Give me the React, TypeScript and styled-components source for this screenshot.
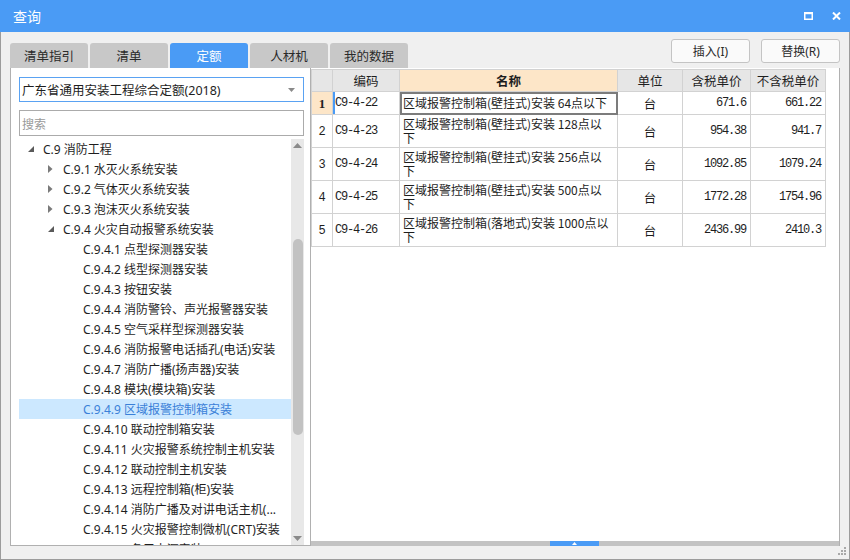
import styled, { createGlobalStyle } from "styled-components";

const GlobalStyle = createGlobalStyle`
  html, body {
    margin: 0;
    padding: 0;
    background: #ffffff;
  }
  * {
    box-sizing: border-box;
  }
`;

const UI_FONT = `"Segoe UI", "Noto Sans", "Noto Sans CJK SC", sans-serif`;
const CJK_FONT = `"Noto Sans CJK SC", sans-serif`;
const MONO_FONT = `"Liberation Mono", "Noto Sans CJK SC", monospace`;
const BLUE = "#4a9bf5";

const Window = styled.div`
  width: 850px;
  height: 560px;
  display: flex;
  flex-direction: column;
  background: #f0f0f0;
  border: 1px solid #9c9c9c;
  border-top: none;
  font-family: ${UI_FONT};
  color: #1e1e1e;
`;

const TitleBar = styled.div`
  height: 32px;
  margin: 0 -1px;
  padding: 0 9px 0 13px;
  display: flex;
  align-items: center;
  background: ${BLUE};
  color: #fff;
  font-family: ${CJK_FONT};
  font-size: 14px;
`;

const Title = styled.span`
  flex: 1;
  margin-top: -1px;
`;

const TitleIcons = styled.div`
  display: flex;
  gap: 19px;
  align-items: center;
`;

const Body = styled.div`
  flex: 1;
  display: flex;
  flex-direction: column;
  padding: 7px 9px 0 9px;
  min-height: 0;
`;

const TopRow = styled.div`
  height: 29px;
  display: flex;
  align-items: flex-end;
`;

const Tabs = styled.div`
  display: flex;
  gap: 2px;
  flex: 1;
`;

const Tab = styled.div<{ $active?: boolean }>`
  width: 78px;
  height: 25px;
  display: flex;
  align-items: center;
  justify-content: center;
  border-radius: 3px 3px 0 0;
  background: ${(p) => (p.$active ? BLUE : "#c8c8c8")};
  color: ${(p) => (p.$active ? "#fff" : "#2a2a2a")};
  font-family: ${CJK_FONT};
  font-size: 12.5px;
`;

const Buttons = styled.div`
  display: flex;
  gap: 11px;
  align-self: flex-start;
`;

const Button = styled.div`
  width: 79px;
  height: 24px;
  display: flex;
  align-items: center;
  justify-content: center;
  border: 1px solid #c4c4c4;
  border-radius: 3px;
  background: #fafafa;
  color: #2a2a2a;
  font-size: 12px;
  font-family: ${UI_FONT};
`;

const Panels = styled.div`
  height: 478px;
  display: flex;
`;

const LeftPanel = styled.div`
  width: 301px;
  display: flex;
  flex-direction: column;
  background: #fff;
  border: 1px solid #b0b0b0;
  border-top: none;
  padding: 9px 6px 0 8px;
`;

const Select = styled.div`
  height: 25px;
  display: flex;
  align-items: center;
  padding: 0 8px 0 2px;
  border: 1px solid #5aa2f2;
  font-family: ${UI_FONT};
  font-size: 12.5px;
  color: #1e1e1e;
  span {
    flex: 1;
  }
`;

const Search = styled.div`
  height: 26px;
  margin-top: 8px;
  display: flex;
  align-items: center;
  padding: 0 2px;
  border: 1px solid #ababab;
  color: #9a9a9a;
  font-family: ${CJK_FONT};
  font-size: 12px;
`;

const TreeArea = styled.div`
  flex: 1;
  margin-top: 3px;
  display: flex;
  min-height: 0;
`;

const TreeList = styled.div`
  flex: 1;
  overflow: hidden;
`;

const TreeRow = styled.div<{ $level: number; $selected?: boolean }>`
  height: 20px;
  display: flex;
  align-items: center;
  padding-left: ${(p) => 8 + (p.$level - 1) * 20}px;
  background: ${(p) => (p.$selected ? "#cce8ff" : "transparent")};
  color: ${(p) => (p.$selected ? "#3a80d8" : "#1e1e1e")};
  font-size: 12px;
  white-space: nowrap;
`;

const Expander = styled.span`
  width: 16px;
  height: 20px;
  display: flex;
  align-items: center;
  padding-left: 1px;
  flex-shrink: 0;
`;

const VScroll = styled.div`
  width: 13px;
  display: flex;
  flex-direction: column;
  background: #e8e8e8;
`;

const ScrollArrow = styled.div`
  height: 13px;
  display: flex;
  align-items: center;
  justify-content: center;
  flex-shrink: 0;
`;

const ScrollTrack = styled.div`
  flex: 1;
  padding: 87px 1px 0 2px;
`;

const ScrollThumb = styled.div`
  height: 196px;
  border-radius: 5px;
  background: #c2c2c2;
`;

const RightPanel = styled.div`
  flex: 1;
  display: flex;
  flex-direction: column;
  background: #fff;
  border-right: 1px solid #b0b0b0;
`;

const TableArea = styled.div`
  flex: 1;
  padding-top: 1px;
`;

const Grid = styled.table`
  border-collapse: collapse;
  table-layout: fixed;
  width: 514px;
  font-size: 12px;
  td, th {
    border: 1px solid #d2d2d2;
    padding: 0;
    overflow: hidden;
  }
`;

const HeadCell = styled.th<{ $accent?: boolean }>`
  height: 22px;
  background: ${(p) => (p.$accent ? "#fde6c8" : "#e6e6e6")};
  font-family: ${CJK_FONT};
  font-weight: ${(p) => (p.$accent ? 700 : 400)};
  font-size: 12.5px;
  color: #1e1e1e;
`;

const BodyRow = styled.tr<{ $tall?: boolean }>`
  height: ${(p) => (p.$tall ? 33 : 23)}px;
`;

const NumCell = styled.td<{ $active?: boolean }>`
  text-align: center;
  background: ${(p) => (p.$active ? "#fde6c8" : "#fff")};
  font-family: ${(p) => (p.$active ? `"Liberation Serif", serif` : MONO_FONT)};
  font-weight: ${(p) => (p.$active ? 700 : 400)};
  font-size: ${(p) => (p.$active ? 13 : 12)}px;
  padding-top: 1px !important;
`;

const CodeCell = styled.td<{ $active?: boolean }>`
  padding-left: 2px !important;
  font-family: ${MONO_FONT};
  font-size: 12px;
  letter-spacing: -1.2px;
  box-shadow: ${(p) => (p.$active ? `inset 2px 0 0 ${BLUE}` : "none")};
`;

const NameCell = styled.td<{ $focus?: boolean }>`
  padding: 0 8px 0 3px !important;
  font-family: ${CJK_FONT};
  font-size: 12px;
  line-height: 14px;
  outline: ${(p) => (p.$focus ? "2px solid #7c7c7c" : "none")};
  outline-offset: -2px;
`;

const UnitCell = styled.td`
  text-align: center;
  font-family: ${CJK_FONT};
  font-size: 12.5px;
`;

const PriceCell = styled.td`
  text-align: right;
  padding-right: 4px !important;
  font-family: ${MONO_FONT};
  font-size: 12px;
  letter-spacing: -1.2px;
`;

const HScroll = styled.div`
  height: 5px;
  background: #c3c3c3;
  display: flex;
`;

const HThumb = styled.div<{ $offset: number }>`
  width: 49px;
  margin-left: ${(p) => p.$offset}px;
  background: ${BLUE};
  display: flex;
  align-items: center;
  justify-content: center;
`;

const Footer = styled.div`
  flex: 1;
  display: flex;
  justify-content: flex-end;
  align-items: flex-end;
  padding: 0 1px 3px 0;
  margin-right: -8px;
`;

type TreeItem = {
  label: string;
  level: number;
  state?: "open" | "closed";
  selected?: boolean;
};

const tree: TreeItem[] = [
  { label: "C.9 消防工程", level: 1, state: "open" },
  { label: "C.9.1 水灭火系统安装", level: 2, state: "closed" },
  { label: "C.9.2 气体灭火系统安装", level: 2, state: "closed" },
  { label: "C.9.3 泡沫灭火系统安装", level: 2, state: "closed" },
  { label: "C.9.4 火灾自动报警系统安装", level: 2, state: "open" },
  { label: "C.9.4.1 点型探测器安装", level: 3 },
  { label: "C.9.4.2 线型探测器安装", level: 3 },
  { label: "C.9.4.3 按钮安装", level: 3 },
  { label: "C.9.4.4 消防警铃、声光报警器安装", level: 3 },
  { label: "C.9.4.5 空气采样型探测器安装", level: 3 },
  { label: "C.9.4.6 消防报警电话插孔(电话)安装", level: 3 },
  { label: "C.9.4.7 消防广播(扬声器)安装", level: 3 },
  { label: "C.9.4.8 模块(模块箱)安装", level: 3 },
  { label: "C.9.4.9 区域报警控制箱安装", level: 3, selected: true },
  { label: "C.9.4.10 联动控制箱安装", level: 3 },
  { label: "C.9.4.11 火灾报警系统控制主机安装", level: 3 },
  { label: "C.9.4.12 联动控制主机安装", level: 3 },
  { label: "C.9.4.13 远程控制箱(柜)安装", level: 3 },
  { label: "C.9.4.14 消防广播及对讲电话主机(...", level: 3 },
  { label: "C.9.4.15 火灾报警控制微机(CRT)安装", level: 3 },
  { label: "C.9.4.16 备用电源安装", level: 3 },
];

const rows = [
  { code: "C9-4-22", name: "区域报警控制箱(壁挂式)安装 64点以下", unit: "台", tax: "671.6", noTax: "661.22" },
  { code: "C9-4-23", name: "区域报警控制箱(壁挂式)安装 128点以下", unit: "台", tax: "954.38", noTax: "941.7" },
  { code: "C9-4-24", name: "区域报警控制箱(壁挂式)安装 256点以下", unit: "台", tax: "1092.85", noTax: "1079.24" },
  { code: "C9-4-25", name: "区域报警控制箱(壁挂式)安装 500点以下", unit: "台", tax: "1772.28", noTax: "1754.96" },
  { code: "C9-4-26", name: "区域报警控制箱(落地式)安装 1000点以下", unit: "台", tax: "2436.99", noTax: "2410.3" },
];

const tabs = ["清单指引", "清单", "定额", "人材机", "我的数据"];

function ExpandIcon({ state }: { state?: "open" | "closed" }) {
  if (state === "open") {
    return (
      <svg width="6" height="6" viewBox="0 0 6 6">
        <path d="M6 0 L6 6 L0 6 Z" fill="#5a5a5a" />
      </svg>
    );
  }
  if (state === "closed") {
    return (
      <svg width="5" height="8" viewBox="0 0 5 8">
        <path d="M0 0 L4.5 4 L0 8 Z" fill="#7a7a7a" />
      </svg>
    );
  }
  return null;
}

export default function App() {
  return (
    <>
      <GlobalStyle />
      <Window>
        <TitleBar>
          <Title>查询</Title>
          <TitleIcons>
            <svg width="9" height="8" viewBox="0 0 9 8">
              <rect x="0.75" y="1" width="7.5" height="6.25" fill="none" stroke="#fff" strokeWidth="1.5" />
              <rect x="0" y="0" width="9" height="2.2" fill="#fff" />
            </svg>
            <svg width="9" height="8" viewBox="0 0 9 8">
              <path d="M1 0.5 L8 7.5 M8 0.5 L1 7.5" stroke="#fff" strokeWidth="2" />
            </svg>
          </TitleIcons>
        </TitleBar>
        <Body>
          <TopRow>
            <Tabs>
              {tabs.map((t) => (
                <Tab key={t} $active={t === "定额"}>
                  {t}
                </Tab>
              ))}
            </Tabs>
            <Buttons>
              <Button>插入(I)</Button>
              <Button>替换(R)</Button>
            </Buttons>
          </TopRow>
          <Panels>
            <LeftPanel>
              <Select>
                <span>广东省通用安装工程综合定额(2018)</span>
                <svg width="7" height="4" viewBox="0 0 7 4">
                  <path d="M0 0 L7 0 L3.5 4 Z" fill="#8a8a8a" />
                </svg>
              </Select>
              <Search>搜索</Search>
              <TreeArea>
                <TreeList>
                  {tree.map((item) => (
                    <TreeRow key={item.label} $level={item.level} $selected={item.selected}>
                      <Expander>
                        <ExpandIcon state={item.state} />
                      </Expander>
                      {item.label}
                    </TreeRow>
                  ))}
                </TreeList>
                <VScroll>
                  <ScrollArrow>
                    <svg width="9" height="5" viewBox="0 0 9 5">
                      <path d="M0 5 L4.5 0 L9 5 Z" fill="#8a8a8a" />
                    </svg>
                  </ScrollArrow>
                  <ScrollTrack>
                    <ScrollThumb />
                  </ScrollTrack>
                  <ScrollArrow>
                    <svg width="9" height="5" viewBox="0 0 9 5">
                      <path d="M0 0 L9 0 L4.5 5 Z" fill="#8a8a8a" />
                    </svg>
                  </ScrollArrow>
                </VScroll>
              </TreeArea>
            </LeftPanel>
            <RightPanel>
              <TableArea>
                <Grid>
                  <colgroup>
                    <col style={{ width: 21 }} />
                    <col style={{ width: 67 }} />
                    <col style={{ width: 218 }} />
                    <col style={{ width: 65 }} />
                    <col style={{ width: 68 }} />
                    <col style={{ width: 75 }} />
                  </colgroup>
                  <thead>
                    <tr>
                      <HeadCell />
                      <HeadCell>编码</HeadCell>
                      <HeadCell $accent>名称</HeadCell>
                      <HeadCell>单位</HeadCell>
                      <HeadCell>含税单价</HeadCell>
                      <HeadCell>不含税单价</HeadCell>
                    </tr>
                  </thead>
                  <tbody>
                    {rows.map((r, i) => (
                      <BodyRow key={r.code} $tall={i > 0}>
                        <NumCell $active={i === 0}>{i + 1}</NumCell>
                        <CodeCell $active={i === 0}>{r.code}</CodeCell>
                        <NameCell $focus={i === 0}>{r.name}</NameCell>
                        <UnitCell>{r.unit}</UnitCell>
                        <PriceCell>{r.tax}</PriceCell>
                        <PriceCell>{r.noTax}</PriceCell>
                      </BodyRow>
                    ))}
                  </tbody>
                </Grid>
              </TableArea>
              <HScroll>
                <HThumb $offset={239}>
                  <svg width="5" height="3" viewBox="0 0 5 3">
                    <path d="M0 3 L2.5 0 L5 3 Z" fill="#fff" />
                  </svg>
                </HThumb>
              </HScroll>
            </RightPanel>
          </Panels>
          <Footer>
            <svg width="9" height="9" viewBox="0 0 9 9">
              <rect x="6" y="0" width="2" height="2" fill="#a8a8a8" />
              <rect x="3" y="3" width="2" height="2" fill="#a8a8a8" />
              <rect x="6" y="3" width="2" height="2" fill="#a8a8a8" />
              <rect x="0" y="6" width="2" height="2" fill="#a8a8a8" />
              <rect x="3" y="6" width="2" height="2" fill="#a8a8a8" />
              <rect x="6" y="6" width="2" height="2" fill="#a8a8a8" />
            </svg>
          </Footer>
        </Body>
      </Window>
    </>
  );
}
